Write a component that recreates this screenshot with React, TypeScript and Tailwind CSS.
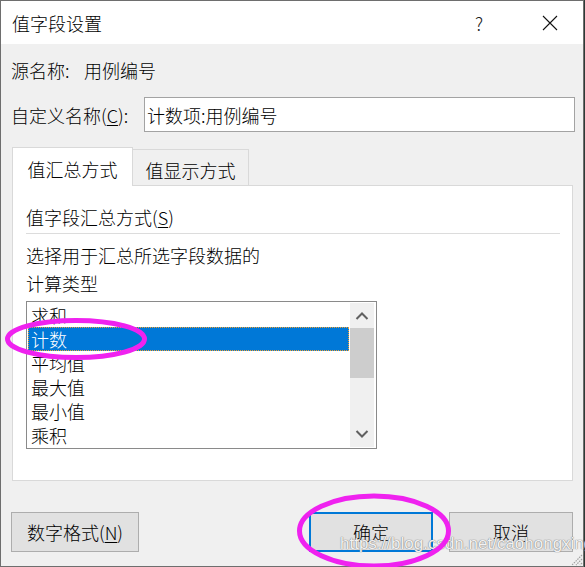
import React from 'react'

const font = { fontFamily: '"Noto Sans CJK SC", "Noto Sans", sans-serif' }

const items = ['求和', '计数', '平均值', '最大值', '最小值', '乘积']

function Chevron({ up }: { up?: boolean }) {
  return (
    <svg width="14" height="8" viewBox="0 0 14 8" className="block">
      <path
        d={up ? 'M1.5 7 L7 1.5 L12.5 7' : 'M1.5 1 L7 6.5 L12.5 1'}
        fill="none"
        stroke="#606060"
        strokeWidth="2"
      />
    </svg>
  )
}

export default function App() {
  return (
    <div className="relative w-[585px] h-[567px] bg-[#2e3a36] overflow-hidden text-black font-light" style={font}>
      {/* Dialog window */}
      <div className="w-[584px] h-[567px] border border-[#6e6e6e] bg-[#f0f0f0] flex flex-col">
        {/* Title bar */}
        <div className="h-[43px] bg-white flex items-center shrink-0">
          <span className="pl-[11px] text-[18px] leading-[24px] pt-[1px]">值字段设置</span>
          <span className="ml-auto w-[20px] text-center text-[18px] leading-[24px] mr-[38px] text-[#222]">?</span>
          <span className="w-[46px] h-[43px] mr-[10px] flex items-center justify-center">
            <svg width="16" height="16" viewBox="0 0 16 16">
              <path d="M1 1 L15 15 M15 1 L1 15" stroke="#111" strokeWidth="1.1" fill="none" />
            </svg>
          </span>
        </div>

        {/* Body */}
        <div className="flex items-center mt-[14px] pl-[10px] text-[18px] leading-[24px]">
          <span className="w-[73px]">源名称:</span>
          <span>用例编号</span>
        </div>

        <div className="flex items-center mt-[15px] pl-[10px] text-[18px] leading-[24px]">
          <span className="w-[133px]">
            自定义名称(<span className="underline underline-offset-2">C</span>):
          </span>
          <div className="w-[431px] h-[35px] border border-[#a3a3a3] bg-white flex items-center pl-[2px]">
            计数项:用例编号
          </div>
        </div>

        {/* Tabs */}
        <div className="flex items-end mt-[15px] ml-[11px] text-[18px] leading-[24px]">
          <div className="relative z-10 -mb-px w-[121px] h-[39px] border border-b-0 border-[#d9d9d9] bg-white flex justify-center pt-[9px]">
            值汇总方式
          </div>
          <div className="w-[116px] h-[36px] border border-l-0 border-b-0 border-[#d9d9d9] bg-[#f0f0f0] flex justify-center pt-[8px]">
            值显示方式
          </div>
        </div>

        {/* Tab panel */}
        <div className="ml-[11px] w-[561px] h-[296px] border border-[#d9d9d9] bg-white pl-[13px] pr-[12px] pt-[19px] text-[18px] leading-[24px]">
          <div>
            值字段汇总方式(<span className="underline underline-offset-2">S</span>)
          </div>
          <div className="mt-[4px] h-px bg-[#dcdcdc]" />
          <p className="mt-[7px] leading-[28px]">
            选择用于汇总所选字段数据的
            <br />
            计算类型
          </p>

          {/* List box */}
          <div className="mt-[4px] w-[351px] h-[148px] border border-[#8a8a8a] bg-white flex py-[1px] pr-[2px]">
            <div className="flex-1 pl-[1px]">
              {items.map((it) =>
                it === '计数' ? (
                  <div
                    key={it}
                    className="h-[24px] leading-[24px] pl-[3px] mr-[1px] bg-[#0078d7] text-white outline-1 outline-dotted outline-[#f0a030] -outline-offset-1"
                  >
                    {it}
                  </div>
                ) : (
                  <div key={it} className="h-[24px] leading-[24px] pl-[3px]">
                    {it}
                  </div>
                )
              )}
            </div>
            <div className="w-[24px] bg-[#f0f0f0] flex flex-col">
              <div className="h-[25px] flex items-center justify-center">
                <Chevron up />
              </div>
              <div className="h-[50px] bg-[#cdcdcd]" />
              <div className="flex-1" />
              <div className="h-[26px] flex items-center justify-center">
                <Chevron />
              </div>
            </div>
          </div>
        </div>

        {/* Buttons */}
        <div className="flex mt-[31px] text-[18px] leading-[24px]">
          <button className="ml-[10px] w-[128px] h-[40px] border border-[#adadad] bg-[#e1e1e1] flex items-center justify-center">
            数字格式(<span className="underline underline-offset-2">N</span>)
          </button>
          <button className="ml-[170px] w-[124px] h-[40px] border-2 border-[#0078d7] bg-[#e1e1e1] flex items-center justify-center">
            确定
          </button>
          <button className="ml-[16px] w-[124px] h-[40px] border border-[#adadad] bg-[#e1e1e1] flex items-center justify-center">
            取消
          </button>
        </div>
      </div>

      {/* Size grip */}
      <svg className="absolute left-[569px] top-[553px]" width="14" height="13" viewBox="0 0 14 13">
        <path d="M13 2 L3 12 M13 6 L7 12 M13 10 L11 12" stroke="#a0a0a0" strokeWidth="1.2" strokeDasharray="1.5 1" />
      </svg>

      {/* Watermark */}
      <div
        className="absolute left-[340px] top-[533px] text-[17px] leading-[22px] text-white/90 whitespace-nowrap"
        style={{
          fontFamily: '"Liberation Sans", Arial, sans-serif',
          textShadow: '0 0 1px #7a7a7a, 0 0 1px #7a7a7a',
        }}
      >
        https://blog.csdn.net/caohongxing
      </div>

      {/* Annotation ellipses */}
      <svg className="absolute left-0 top-0 pointer-events-none" width="585" height="567">
        <ellipse cx="76" cy="339" rx="68.5" ry="18.5" fill="none" stroke="#ef22ef" strokeWidth="5" />
        <ellipse cx="374" cy="531" rx="74.5" ry="35" fill="none" stroke="#ef22ef" strokeWidth="5" />
      </svg>
    </div>
  )
}
